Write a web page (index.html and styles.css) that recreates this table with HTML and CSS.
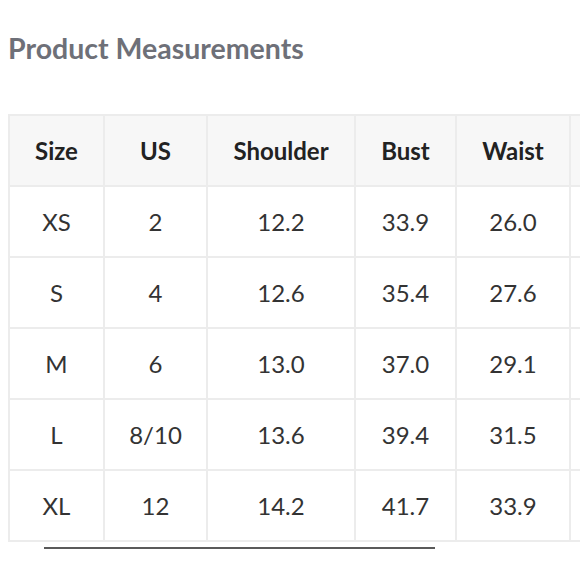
FILE: index.html
```html
<!DOCTYPE html>
<html>
<head>
<meta charset="utf-8">
<link rel="stylesheet" href="styles.css">
</head>
<body>
<section class="measure">
  <h2 class="title">Product Measurements</h2>
  <div class="scroller">
    <table class="chart">
      <thead>
        <tr><th class="c1">Size</th><th class="c2">US</th><th class="c3">Shoulder</th><th class="c4">Bust</th><th class="c5">Waist</th><th class="c6"></th></tr>
      </thead>
      <tbody>
        <tr><td>XS</td><td>2</td><td>12.2</td><td>33.9</td><td>26.0</td><td></td></tr>
        <tr><td>S</td><td>4</td><td>12.6</td><td>35.4</td><td>27.6</td><td></td></tr>
        <tr><td>M</td><td>6</td><td>13.0</td><td>37.0</td><td>29.1</td><td></td></tr>
        <tr><td>L</td><td>8/10</td><td>13.6</td><td>39.4</td><td>31.5</td><td></td></tr>
        <tr><td>XL</td><td>12</td><td>14.2</td><td>41.7</td><td>33.9</td><td></td></tr>
      </tbody>
    </table>
  </div>
  <div class="track"><div class="thumb"></div></div>
</section>
</body>
</html>
```
FILE: styles.css
```css
html, body {
  margin: 0;
  padding: 0;
  background: #ffffff;
  overflow: hidden;
}
body {
  font-family: Lato, "Open Sans", sans-serif;
  color: #333333;
}
.measure {
  padding: 32px 0 0 8px;
}
.title {
  margin: 0;
  font-size: 28.5px;
  line-height: 32px;
  font-weight: 700;
  color: #6e7078;
}
.scroller {
  margin-top: 50px;
  width: 800px;
}
.chart {
  border-collapse: collapse;
  table-layout: fixed;
  font-size: 24px;
}
.chart th, .chart td {
  border: 2px solid #ececec;
  text-align: center;
  height: 69px;
  padding: 0;
}
.chart th {
  background: #f7f7f7;
  font-weight: 700;
  color: #222222;
}
.chart td {
  color: #333333;
}
.c1 { width: 93px; }
.c2 { width: 101px; }
.c3 { width: 146px; }
.c4 { width: 99px; }
.c5 { width: 112px; }
.c6 { width: 100px; }
.track {
  height: 2px;
  margin-top: 5px;
  padding-left: 36px;
}
.thumb {
  width: 391px;
  height: 2px;
  background: #5a5a5a;
}
```
